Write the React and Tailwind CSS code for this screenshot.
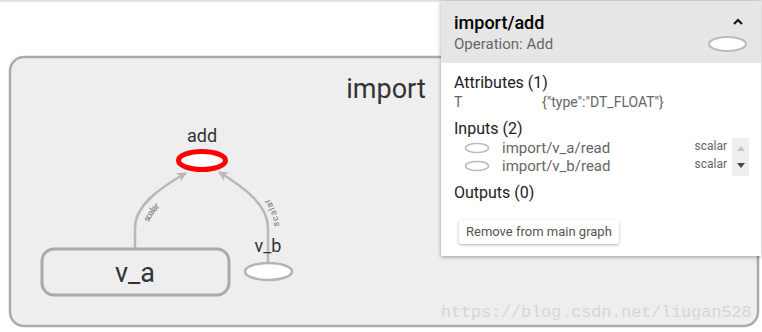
import React from 'react';

const inputs = [
  { name: 'import/v_a/read', kind: 'scalar' },
  { name: 'import/v_b/read', kind: 'scalar' },
];

const GraphCanvas = () => (
  <svg className="absolute inset-0" width="762" height="332" style={{ fontFamily: 'Roboto, sans-serif' }}>
    <defs>
      <marker
        id="arrow"
        viewBox="0 0 10 10"
        refX="9"
        refY="5"
        markerUnits="userSpaceOnUse"
        markerWidth="11"
        markerHeight="10"
        orient="auto"
      >
        <path d="M0 0 L10 5 L0 10 L3 5 z" fill="#b8b8b8" />
      </marker>
      <path id="edge-a" d="M135 248 L135 228 C135 205 160 188 186 173" />
      <path id="edge-b" d="M268 262 L268 228 C268 205 245 188 219 172" />
    </defs>

    {/* import namespace */}
    <rect x="10" y="57" width="748" height="269" rx="14" fill="#eeeeee" stroke="#aaaaaa" strokeWidth="2.5" />
    <text x="386" y="98" textAnchor="middle" fontSize="27" fill="#333">import</text>

    {/* edges */}
    <use href="#edge-a" fill="none" stroke="#b8b8b8" strokeWidth="2.5" markerEnd="url(#arrow)" />
    <use href="#edge-b" fill="none" stroke="#b8b8b8" strokeWidth="2.5" markerEnd="url(#arrow)" />
    <text fontSize="9" fill="#777">
      <textPath href="#edge-a" startOffset="44%" textAnchor="middle">
        <tspan dy="13">scalar</tspan>
      </textPath>
    </text>
    <text fontSize="9" fill="#777">
      <textPath href="#edge-b" startOffset="42%" textAnchor="middle">
        <tspan dy="11">scalar</tspan>
      </textPath>
    </text>

    {/* add op */}
    <text x="202" y="142" textAnchor="middle" fontSize="18" fill="#333">add</text>
    <ellipse cx="202" cy="160.5" rx="23.5" ry="9" fill="#fff" stroke="#ff0000" strokeWidth="5" />

    {/* v_a */}
    <rect x="42" y="249" width="187" height="46" rx="12" fill="#eeeeee" stroke="#aaaaaa" strokeWidth="3" />
    <text x="135" y="282" textAnchor="middle" fontSize="27" fill="#333">v_a</text>

    {/* v_b */}
    <text x="268" y="252" textAnchor="middle" fontSize="18" fill="#333">v_b</text>
    <ellipse cx="268.5" cy="271.5" rx="23.5" ry="8.5" fill="#fff" stroke="#b4b4b4" strokeWidth="2.5" />
  </svg>
);

const InfoCard = () => (
  <div className="absolute left-[441px] top-[1px] w-[320px] bg-white shadow-[0_1px_4px_rgba(0,0,0,0.35)] font-['Roboto',sans-serif]">
    {/* header */}
    <div className="flex justify-between bg-[#e6e6e6] h-[62px] pl-[13px] pr-[13px] pt-[11px]">
      <div>
        <div className="text-[18px] leading-[22px] font-medium text-black">import/add</div>
        <div className="mt-[0px] text-[15px] leading-[20px] text-[#666]">Operation: Add</div>
      </div>
      <div className="flex flex-col items-end">
        <svg width="10" height="7" viewBox="0 0 10 7" className="mt-[6px] mr-[5px]">
          <polyline points="1,6 5,2 9,6" fill="none" stroke="#111" strokeWidth="2" />
        </svg>
        <svg width="41" height="18" viewBox="0 0 41 18" className="mt-[10px]">
          <ellipse cx="20.5" cy="9" rx="18.5" ry="7" fill="#fff" stroke="#bbb" strokeWidth="2" />
        </svg>
      </div>
    </div>

    {/* body */}
    <div className="pl-[13px] pt-[10px] pb-[12px]">
      <div className="text-[16px] leading-[20px] text-[#212121]">Attributes (1)</div>
      <div className="flex text-[14px] leading-[18px] text-[#666]">
        <span className="w-[88px]">T</span>
        <span>{'{"type":"DT_FLOAT"}'}</span>
      </div>

      <div className="mt-[8px] text-[16px] leading-[20px] text-[#212121]">Inputs (2)</div>
      <div className="flex pr-[12px]">
        <div className="flex-1">
          {inputs.map((input) => (
            <div key={input.name} className="flex items-center h-[18px]">
              <svg width="26" height="12" viewBox="0 0 26 12" className="ml-[10px]">
                <ellipse cx="13" cy="6" rx="11.5" ry="4.5" fill="#fff" stroke="#bbb" strokeWidth="1.5" />
              </svg>
              <span className="ml-[12px] flex-1 text-[15px] leading-[18px] text-[#666]">{input.name}</span>
              <span className="self-start mt-[1px] text-[12px] leading-[12px] text-[#666]">{input.kind}</span>
            </div>
          ))}
        </div>
        <div className="ml-[5px] mt-[-1px] w-[17px] h-[38px] bg-[#eeeeee] flex flex-col items-center justify-between py-[8px]">
          <svg width="8" height="5" viewBox="0 0 8 5">
            <polygon points="0,5 4,0 8,5" fill="#c4c4c4" />
          </svg>
          <svg width="8" height="5" viewBox="0 0 8 5">
            <polygon points="0,0 8,0 4,5" fill="#444" />
          </svg>
        </div>
      </div>

      <div className="mt-[7px] text-[16px] leading-[20px] text-[#212121]">Outputs (0)</div>

      <button
        type="button"
        className="mt-[17px] ml-[5px] h-[24px] px-[7px] rounded-[3px] bg-white text-[13px] text-[#555] shadow-[0_1px_3px_rgba(0,0,0,0.3)]"
      >
        Remove from main graph
      </button>
    </div>
  </div>
);

export default function App() {
  return (
    <div className="relative w-[762px] h-[332px] overflow-hidden bg-white">
      <GraphCanvas />
      <div className="absolute top-0 left-0 right-0 h-[3px] bg-gradient-to-b from-[#d6d6d6] to-transparent" />
      <InfoCard />
      <div className="absolute left-[441px] top-[302px] font-['Liberation_Mono',monospace] text-[16.7px] leading-[22px] text-[#d6d6d6]">
        https://blog.csdn.net/liugan528
      </div>
    </div>
  );
}
